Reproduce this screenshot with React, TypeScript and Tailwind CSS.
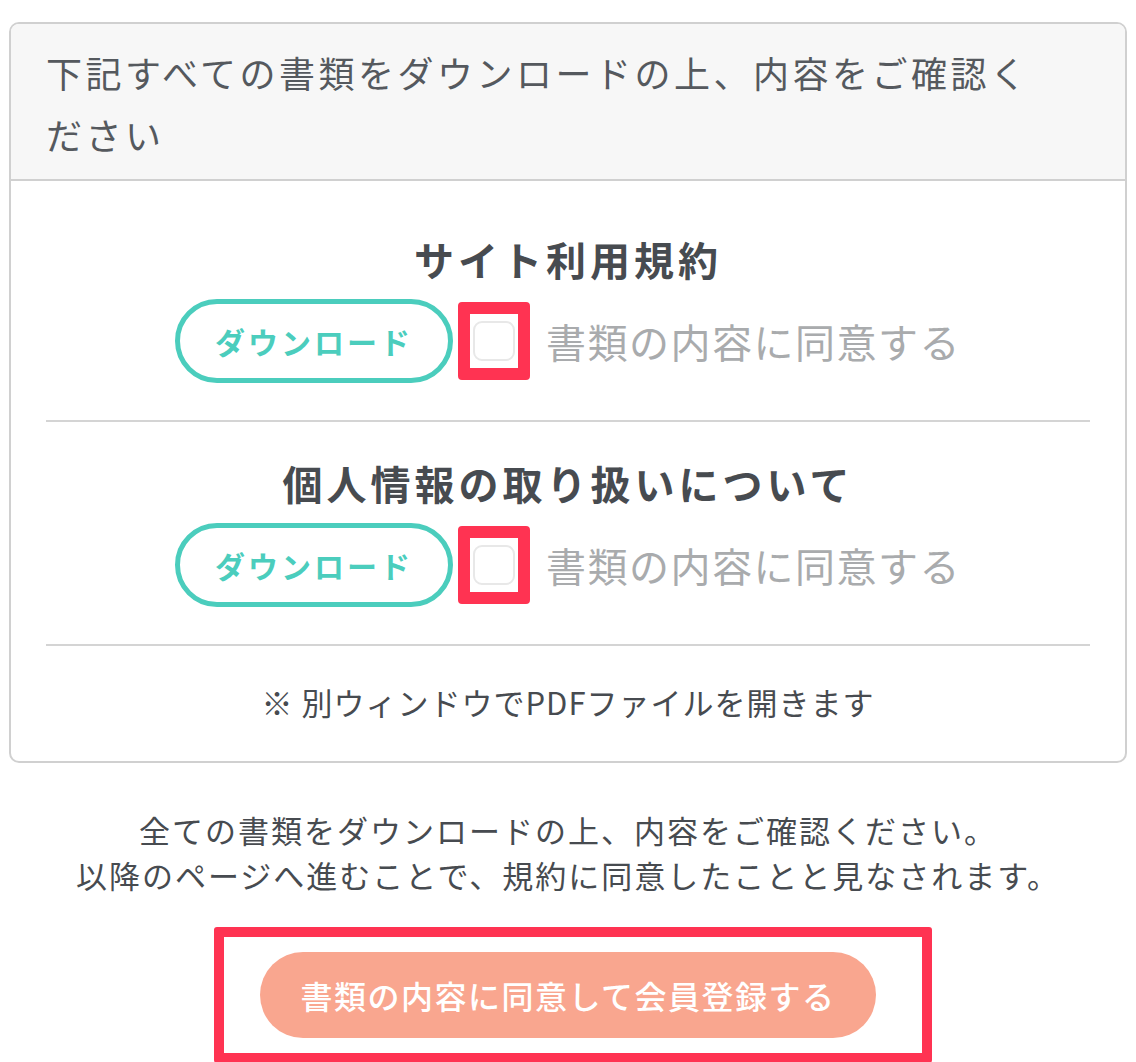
const font = { fontFamily: '"Noto Sans CJK JP", "Noto Sans", sans-serif' };

function DocRow({ title, top }: { title: string; top: string }) {
  return (
    <div className={`flex flex-col items-center pb-[37px] border-b-2 border-[#d4d4d4] ${top}`}>
      <h2 className="text-[40px] leading-[56px] font-bold tracking-[4px] text-[#474b50]">{title}</h2>
      <div className="mt-[12px] flex items-center">
        <button className="w-[278px] h-[84px] rounded-full border-[5px] border-[#4bcdbd] text-[30px] font-bold tracking-[3px] text-[#4bcdbd]">
          ダウンロード
        </button>
        <span className="ml-[5px] flex h-[78px] w-[72px] items-center justify-center rounded-[4px] border-[12px] border-[#ff3352] bg-white">
          <span className="h-[40px] w-[42px] rounded-[9px] border-2 border-[#e8e8e8] bg-white" />
        </span>
        <span className="ml-[16px] text-[40px] tracking-[1.5px] text-[#a9abad]">書類の内容に同意する</span>
      </div>
    </div>
  );
}

export default function App() {
  return (
    <div className="min-h-[1062px] bg-white pt-[22px] px-[9px] overflow-hidden" style={font}>
      <div className="rounded-[10px] border-2 border-[#d0d0d0] overflow-hidden">
        <div className="bg-[#f7f7f7] border-b-2 border-[#d0d0d0] px-[35px] pt-[17px] pb-[14px]">
          <p className="text-[36px] leading-[62px] tracking-[3.5px] text-[#55595e]">
            下記すべての書類をダウンロードの上、内容をご確認く
            <br />
            ださい
          </p>
        </div>
        <div className="px-[35px]">
          {/* first section sits lower under the header */}
          <DocRow title="サイト利用規約" top="pt-[50px]" />
          <DocRow title="個人情報の取り扱いについて" top="pt-[33px]" />
          <p className="pt-[33px] pb-[36px] text-center text-[31px] leading-[46px] tracking-[1px] text-[#474b50]">
            ※ 別ウィンドウでPDFファイルを開きます
          </p>
        </div>
      </div>
      <div className="mt-[44px] text-center text-[31px] tracking-[2px] text-[#474b50]">
        <p className="leading-[45px]">全ての書類をダウンロードの上、内容をご確認ください。</p>
        <p className="leading-[45px]">以降のページへ進むことで、規約に同意したことと見なされます。</p>
      </div>
      <div className="mt-[30px] flex justify-center">
        <div className="ml-[10px] w-[718px] border-[10px] border-[#ff3352] rounded-[3px] pt-[15px] pb-[15px] flex justify-center">
          <button className="ml-[-10px] w-[616px] h-[86px] rounded-full bg-[#f9a68f] text-[32px] font-medium tracking-[1.5px] text-white">
            書類の内容に同意して会員登録する
          </button>
        </div>
      </div>
    </div>
  );
}
